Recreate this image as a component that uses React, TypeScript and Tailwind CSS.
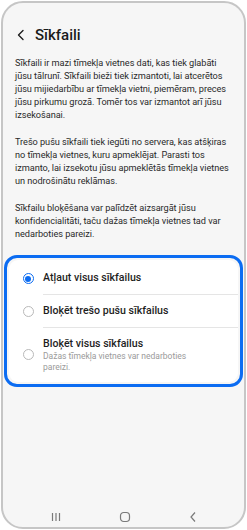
import React from "react";

const font = { fontFamily: "Roboto, 'Liberation Sans', sans-serif" };

function Radio({ checked }: { checked?: boolean }) {
  return checked ? (
    <span className="flex h-[11px] w-[11px] shrink-0 items-center justify-center rounded-full border-[1.5px] border-[#0b6cf2]">
      <span className="h-[6px] w-[6px] rounded-full bg-[#0b6cf2]" />
    </span>
  ) : (
    <span className="h-[11px] w-[11px] shrink-0 rounded-full border-[1.5px] border-[#b9b9b9]" />
  );
}

function Option({ label, hint, checked, last }: { label: string; hint?: string; checked?: boolean; last?: boolean }) {
  return (
    <div className="flex items-center">
      <div className="flex w-[34px] justify-center pl-[4px]">
        <Radio checked={checked} />
      </div>
      <div className={`flex-1 pr-2 ${last ? "" : "border-b border-[#e5e5e5]"} ${hint ? "pb-[7px] pt-[9px]" : "py-[9px]"}`}>
        <div className="text-[10.6px] font-medium leading-[14px] text-[#1e1e1e]">{label}</div>
        {hint && <div className="w-[150px] text-[8.5px] leading-[11px] text-[#9a9a9a]">{hint}</div>}
      </div>
    </div>
  );
}

export default function App() {
  return (
    <div className="h-[530px] w-[247px] bg-white pl-px pt-px" style={font}>
      <div className="flex h-[528px] w-[245px] flex-col rounded-[22px] border-2 border-[#c6c6c6] bg-[#f6f6f6]">
        <div className="flex items-center gap-[9px] pl-[13px] pt-[22px]">
          <svg width="10" height="12" viewBox="0 0 10 12" fill="none">
            <path d="M7 1.5 L2.5 6 L7 10.5" stroke="#1e1e1e" strokeWidth="1.4" strokeLinecap="round" strokeLinejoin="round" />
          </svg>
          <span className="text-[15px] font-medium leading-[20px] text-[#1b1b1b]">Sīkfaili</span>
        </div>

        <div className="flex flex-col gap-[14px] pl-[12px] pr-[13px] pt-[11px] text-[9.2px] leading-[13px] tracking-[-0.05px] text-[#2a2a2a]">
          <p>
            Sīkfaili ir mazi tīmekļa vietnes dati, kas tiek glabāti jūsu tālrunī. Sīkfaili bieži tiek izmantoti, lai
            atcerētos jūsu mijiedarbību ar tīmekļa vietni, piemēram, preces jūsu pirkumu grozā. Tomēr tos var izmantot
            arī jūsu izsekošanai.
          </p>
          <p>
            Trešo pušu sīkfaili tiek iegūti no servera, kas atšķiras no tīmekļa vietnes, kuru apmeklējat. Parasti tos
            izmanto, lai izsekotu jūsu apmeklētās tīmekļa vietnes un nodrošinātu reklāmas.
          </p>
          <p>
            Sīkfailu bloķēšana var palīdzēt aizsargāt jūsu konfidencialitāti, taču dažas tīmekļa vietnes tad var
            nedarboties pareizi.
          </p>
        </div>

        <div className="mx-[1px] mt-[15px] rounded-[13px] border-[3px] border-[#0b6cf2] p-[2px]">
          <div className="rounded-[9px] bg-white py-[2px]">
            <Option label="Atļaut visus sīkfailus" checked />
            <Option label="Bloķēt trešo pušu sīkfailus" />
            <Option label="Bloķēt visus sīkfailus" hint="Dažas tīmekļa vietnes var nedarboties pareizi." last />
          </div>
        </div>

        <div className="mt-auto flex items-center justify-around px-[18px] pb-[4px]">
          <svg width="12" height="10" viewBox="0 0 12 10">
            <path d="M2.5 1v8M6 1v8M9.5 1v8" stroke="#7a7a7a" strokeWidth="1.2" />
          </svg>
          <svg width="12" height="12" viewBox="0 0 12 12">
            <rect x="1.5" y="1.5" width="9" height="9" rx="3.2" fill="none" stroke="#7a7a7a" strokeWidth="1.2" />
          </svg>
          <svg width="10" height="12" viewBox="0 0 10 12">
            <path d="M7 1.5 L3 6 L7 10.5" fill="none" stroke="#7a7a7a" strokeWidth="1.2" />
          </svg>
        </div>
      </div>
    </div>
  );
}
